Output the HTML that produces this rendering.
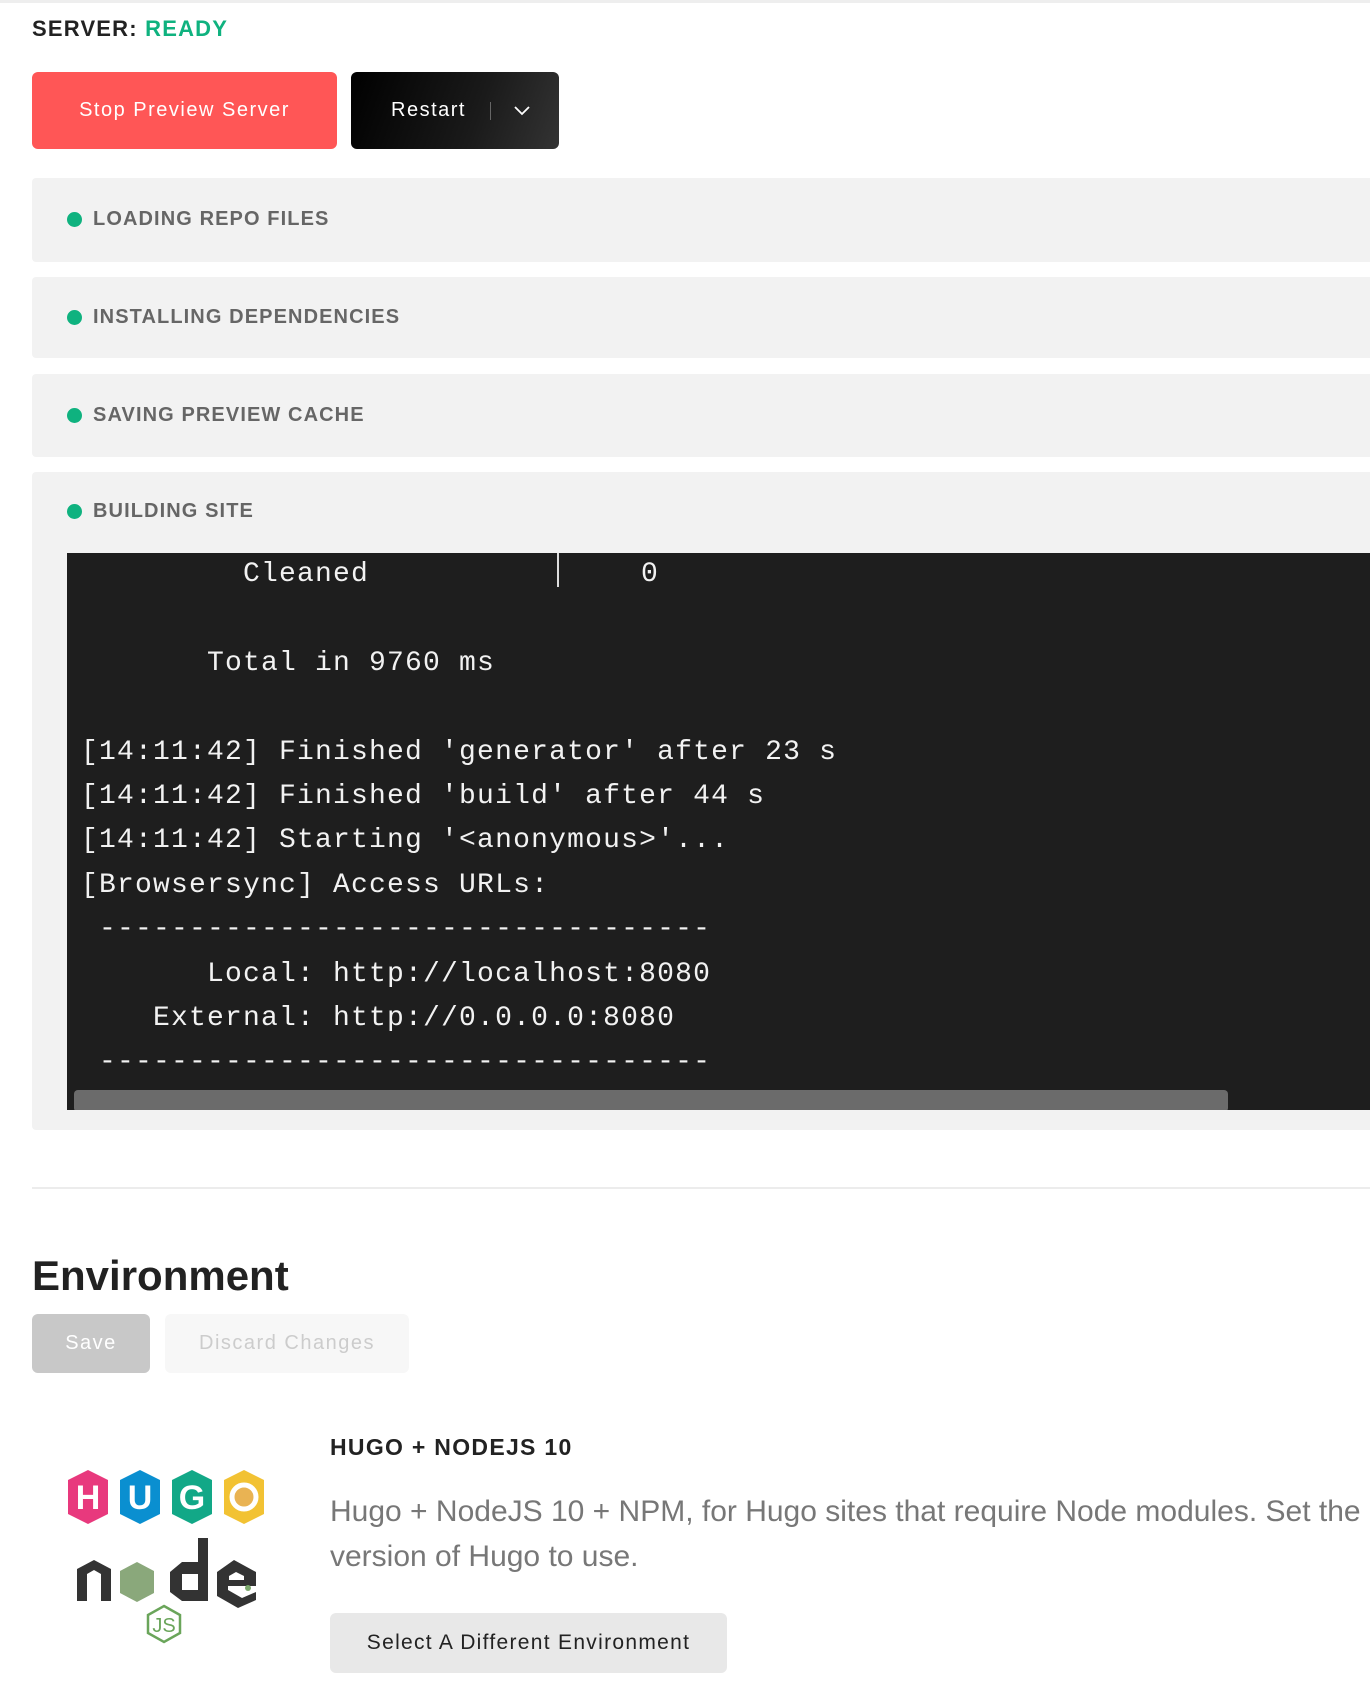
<!DOCTYPE html>
<html><head><meta charset="utf-8"><style>
*{margin:0;padding:0;box-sizing:border-box}
body{width:1370px;height:1688px;background:#fff;font-family:"Liberation Sans",sans-serif;position:relative;overflow:hidden}
.a{position:absolute}
.topline{left:0;top:0;width:1370px;height:3px;background:#eee}
.srv{left:32px;top:16px;font-size:22px;font-weight:bold;letter-spacing:1.2px;color:#222}
.srv span{color:#0fb27f}
.btn{border-radius:6px;color:#fff;font-size:20px;letter-spacing:1.5px;display:flex;align-items:center;justify-content:center}
.panel{left:32px;width:1338px;background:#f2f2f2;border-radius:4px 0 0 4px}
.ph{position:absolute;left:35px;font-size:20px;font-weight:bold;color:#666;letter-spacing:1.1px;display:flex;align-items:center}
.ph i{display:inline-block;width:15px;height:15px;border-radius:50%;background:#0fb27f;margin-right:11px}
.term{left:67px;top:553px;width:1303px;height:557px;background:#1e1e1e;overflow:hidden}
.term div{position:absolute;color:#f2f2f2;font-family:"Liberation Mono",monospace;font-size:28px;letter-spacing:1.2px;white-space:pre;line-height:32px}
</style></head><body>
<div class="a topline"></div>
<div class="a srv">SERVER: <span>READY</span></div>
<div class="a btn" style="left:32px;top:72px;width:305px;height:77px;background:#ff5656">Stop Preview Server</div>
<div class="a btn" style="left:351px;top:72px;width:208px;height:77px;background:linear-gradient(110deg,#000 0%,#1a1a1a 60%,#333 100%);padding-left:12px">Restart<span style="display:inline-block;width:1px;height:18px;background:#666;margin:0 22px 0 24px"></span><svg width="18" height="12" viewBox="0 0 18 12"><path d="M2 2 L9 9 L16 2" stroke="#fff" stroke-width="1.8" fill="none"/></svg></div>

<div class="a panel" style="top:178px;height:84px"><div class="ph" style="top:30px"><i></i>LOADING REPO FILES</div></div>
<div class="a panel" style="top:277px;height:81px"><div class="ph" style="top:29px"><i></i>INSTALLING DEPENDENCIES</div></div>
<div class="a panel" style="top:374px;height:83px"><div class="ph" style="top:30px"><i></i>SAVING PREVIEW CACHE</div></div>
<div class="a panel" style="top:472px;height:658px"><div class="ph" style="top:28px"><i></i>BUILDING SITE</div></div>

<div class="a term">
<div style="left:176px;top:6px">Cleaned</div>
<div style="left:490px;top:0;width:2px;height:34px;background:#ddd"></div>
<div style="left:574px;top:6px">0</div>
<div style="left:140px;top:95px">Total in 9760 ms</div>
<div style="left:14px;top:184px">[14:11:42] Finished 'generator' after 23 s</div>
<div style="left:14px;top:228px">[14:11:42] Finished 'build' after 44 s</div>
<div style="left:14px;top:272px">[14:11:42] Starting '&lt;anonymous&gt;'...</div>
<div style="left:14px;top:317px">[Browsersync] Access URLs:</div>
<div style="left:14px;top:361px"> ----------------------------------</div>
<div style="left:14px;top:406px">       Local: http://localhost:8080</div>
<div style="left:14px;top:450px">    External: http://0.0.0.0:8080</div>
<div style="left:14px;top:494px"> ----------------------------------</div>
<div style="left:7px;top:537px;width:1154px;height:22px;background:#6b6b6b;border-radius:4px"></div>
</div>

<div class="a" style="left:32px;top:1187px;width:1338px;height:2px;background:#ececec"></div>
<div class="a" style="left:32px;top:1252px;font-size:42px;font-weight:bold;color:#222">Environment</div>
<div class="a btn" style="left:32px;top:1314px;width:118px;height:59px;background:#c8c8c8;font-size:20px">Save</div>
<div class="a btn" style="left:165px;top:1314px;width:244px;height:59px;background:#f7f7f7;color:#ccc;font-size:20px">Discard Changes</div>

<svg class="a" style="left:62px;top:1466px" width="210" height="64" viewBox="0 0 210 64">
<g font-family="Liberation Sans" font-weight="bold" font-size="34" text-anchor="middle" fill="#fff">
<polygon points="26,4 46,14 46,48 26,58 6,48 6,14" fill="#e8397d"/><text x="26" y="43">H</text>
<polygon points="78,4 98,14 98,48 78,58 58,48 58,14" fill="#0a8fd0"/><text x="78" y="43">U</text>
<polygon points="130,4 150,14 150,48 130,58 110,48 110,14" fill="#12a887"/><text x="130" y="43">G</text>
<polygon points="182,4 202,14 202,48 182,58 162,48 162,14" fill="#f2c233"/><circle cx="182" cy="31" r="12" fill="#e9b353" stroke="#fff" stroke-width="5"/>
</g></svg>
<svg class="a" style="left:72px;top:1536px" width="190" height="112" viewBox="0 0 190 112">
<path d="M5 33 L22 24 L39 33 L39 65 L29 65 L29 38 L22 34 L15 38 L15 65 L5 65Z" fill="#333"/>
<polygon points="65,26 82,35 82,57 65,66 48,57 48,35" fill="#8aa87b"/>
<path d="M126 2 L136 2 L136 65 L110 65 L98 56 L98 36 L110 26 L126 26Z M110 38 L110 54 L126 54 L126 38Z" fill="#333"/>
<path d="M162 24 L184 36 L184 50 L156 50 L156 54 L170 62 L184 56 L184 64 L166 72 L145 60 L145 36Z M157 40 L157 44 L172 44 L172 40 L164 36Z" fill="#333"/>
<circle cx="176" cy="52" r="3" fill="#7aa86b"/>
<polygon points="92,70 108,79 108,97 92,106 76,97 76,79" fill="none" stroke="#6aa55a" stroke-width="2.5"/>
<text x="92" y="96" font-family="Liberation Sans" font-size="20" fill="#6aa55a" text-anchor="middle">JS</text>
</svg>

<div class="a" style="left:330px;top:1434px;font-size:23px;font-weight:bold;color:#222;letter-spacing:1.3px">HUGO + NODEJS 10</div>
<div class="a" style="left:330px;top:1489px;font-size:30px;color:#777;line-height:45px;white-space:nowrap">Hugo + NodeJS 10 + NPM, for Hugo sites that require Node modules. Set the<br>version of Hugo to use.</div>
<div class="a btn" style="left:330px;top:1613px;width:397px;height:60px;background:#e8e8e8;color:#222;font-size:21px;letter-spacing:1.3px">Select A Different Environment</div>
</body></html>
